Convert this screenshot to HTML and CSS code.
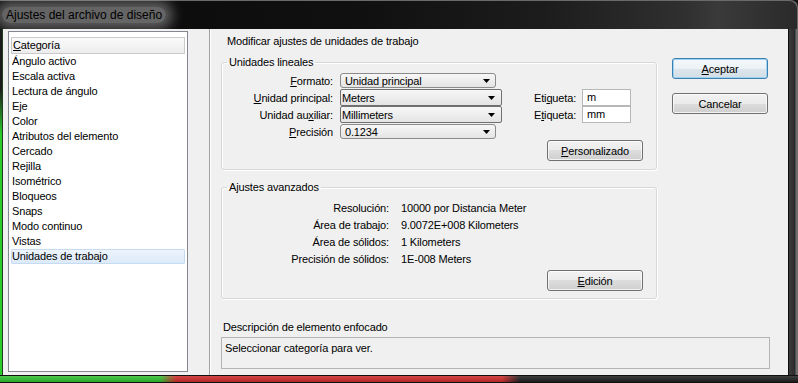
FILE: index.html
```html
<!DOCTYPE html>
<html lang="es">
<head>
    <meta charset="UTF-8">
    <meta name="viewport" content="width=device-width, initial-scale=1.0">
    <title>Ajustes del archivo de diseño</title>
    <link rel="stylesheet" href="styles.css">
</head>
<body>
    <div class="window">
        <div class="titlebar">
            <span class="title">Ajustes del archivo de diseño</span>
        </div>

        <div class="frame-mid">
            <div class="frame-left"></div>
            <div class="client">
                <aside class="sidebar">
                    <div class="listbox">
                        <div class="list-head"><u>C</u>ategoría</div>
                        <ul class="list">
                            <li>Ángulo activo</li>
                            <li>Escala activa</li>
                            <li>Lectura de ángulo</li>
                            <li>Eje</li>
                            <li>Color</li>
                            <li>Atributos del elemento</li>
                            <li>Cercado</li>
                            <li>Rejilla</li>
                            <li>Isométrico</li>
                            <li>Bloqueos</li>
                            <li>Snaps</li>
                            <li>Modo continuo</li>
                            <li>Vistas</li>
                            <li class="selected">Unidades de trabajo</li>
                        </ul>
                    </div>
                </aside>

                <div class="divider"></div>

                <main class="panel">
                    <div class="panel-title">Modificar ajustes de unidades de trabajo</div>

                    <div class="panel-top">
                        <div class="groups">
                            <fieldset class="group group-linear">
                                <legend>Unidades lineales</legend>
                                <div class="linear-grid">
                                    <span class="field-label"><u>F</u>ormato:</span>
                                    <div class="combo combo-list">
                                        <span>Unidad principal</span>
                                        <svg width="7" height="4" viewBox="0 0 7 4"><path d="M0 0h7L3.5 4z"/></svg>
                                    </div>
                                    <span></span><span></span>

                                    <span class="field-label"><u>U</u>nidad principal:</span>
                                    <div class="combo combo-edit">
                                        <span>Meters</span>
                                        <svg width="7" height="4" viewBox="0 0 7 4"><path d="M0 0h7L3.5 4z"/></svg>
                                    </div>
                                    <span class="tag-label">Eti<u>q</u>ueta:</span>
                                    <div class="textbox">m</div>

                                    <span class="field-label">Unidad au<u>x</u>iliar:</span>
                                    <div class="combo combo-edit">
                                        <span>Millimeters</span>
                                        <svg width="7" height="4" viewBox="0 0 7 4"><path d="M0 0h7L3.5 4z"/></svg>
                                    </div>
                                    <span class="tag-label">E<u>t</u>iqueta:</span>
                                    <div class="textbox">mm</div>

                                    <span class="field-label"><u>P</u>recisión</span>
                                    <div class="combo combo-list">
                                        <span>0.1234</span>
                                        <svg width="7" height="4" viewBox="0 0 7 4"><path d="M0 0h7L3.5 4z"/></svg>
                                    </div>
                                    <span></span><span></span>
                                </div>
                                <div class="group-foot">
                                    <button class="btn"><u>P</u>ersonalizado</button>
                                </div>
                            </fieldset>

                            <fieldset class="group group-adv">
                                <legend>Ajustes avanzados</legend>
                                <div class="adv-grid">
                                    <span class="adv-label">Resolución:</span>
                                    <span>10000 por Distancia Meter</span>
                                    <span class="adv-label">Área de trabajo:</span>
                                    <span>9.0072E+008 Kilometers</span>
                                    <span class="adv-label">Área de sólidos:</span>
                                    <span>1 Kilometers</span>
                                    <span class="adv-label">Precisión de sólidos:</span>
                                    <span>1E-008 Meters</span>
                                </div>
                                <div class="group-foot group-foot-adv">
                                    <button class="btn"><u>E</u>dición</button>
                                </div>
                            </fieldset>
                        </div>

                        <div class="actions">
                            <button class="btn btn-default"><u>A</u>ceptar</button>
                            <button class="btn">Cancelar</button>
                        </div>
                    </div>

                    <div class="desc-label">Descripción de elemento enfocado</div>
                    <div class="desc-box">Seleccionar categoría para ver.</div>
                </main>
            </div>
            <div class="frame-right"></div>
        </div>

        <div class="frame-bottom"></div>
    </div>
</body>
</html>
```

FILE: styles.css
```css
* {
    box-sizing: border-box;
}

body {
    margin: 0;
    background: #000;
    font-family: "Liberation Sans", Arial, sans-serif;
    font-size: 11px;
    letter-spacing: -0.15px;
    color: #000;
}

.window {
    width: 798px;
    height: 383px;
    display: grid;
    grid-template-rows: 29px 346px 8px;
    background: #151515;
    overflow: hidden;
}

/* barra de titulo estilo aero */
.titlebar {
    display: flex;
    align-items: center;
    padding-left: 2px;
    background: linear-gradient(90deg, #0a0a0a 0%, #101010 45%, #1c1c1c 68%, #303030 86%, #3a3a3a 90%, #2a2a2a 100%);
    border-top-right-radius: 8px;
    box-shadow: inset -1px 1px 0 #6a6a6a;
}

.title {
    font-size: 12px;
    letter-spacing: 0;
    line-height: 16px;
    padding: 0 4px;
    border-radius: 10px;
    background: rgba(190, 190, 190, 0.5);
    box-shadow: 0 0 12px 7px rgba(180, 180, 180, 0.48);
}

.frame-mid {
    display: flex;
}

.frame-left {
    width: 3px;
    background: linear-gradient(#1b1b1b 0, #1b1b1b 60px, #2ccb2c 105px, #2ccb2c 100%);
    border-right: 1px solid #1d3d1d;
}

.frame-right {
    flex: 1;
    background: linear-gradient(90deg, #0d0d0d 0 1px, #3b3b3b 1px, #2a2a2a 7px, #6e6e6e 8px);
}

.frame-bottom {
    background:
        linear-gradient(#101010 0 1px, transparent 1px, transparent 7px, #101010 7px),
        linear-gradient(rgba(255, 255, 255, 0.18), rgba(0, 0, 0, 0.18)),
        linear-gradient(90deg, #2dc42d 0, #2dc42d 160px, #d42727 176px, #d42727 502px, #1b1b1b 520px);
}

.client {
    width: 785px;
    display: flex;
    background: #f0f0f0;
}

/* lista de categorias */
.sidebar {
    width: 206px;
    padding: 2px 0 3px 5px;
}

.listbox {
    width: 180px;
    height: 341px;
    padding: 5px 2px 0 2px;
    background: #fff;
    border: 1px solid #828790;
}

.list-head {
    height: 17px;
    line-height: 15px;
    padding-left: 1px;
    border: 1px solid #cacaca;
    background: linear-gradient(#fafafa, #ededed);
}

.list {
    list-style: none;
    margin: 0;
    padding: 0;
}

.list li {
    height: 15px;
    line-height: 15px;
    padding-left: 1px;
}

.list li.selected {
    border-radius: 2px;
    background: linear-gradient(#eef5fd, #dbe9f9);
    box-shadow: inset 0 0 0 1px #c5dbf2;
}

.divider {
    width: 2px;
    border-left: 1px solid #a0a0a0;
    background: #fff;
}

/* panel derecho */
.panel {
    flex: 1;
    display: flex;
    flex-direction: column;
    padding: 5px 0 0 10px;
}

.panel-title {
    line-height: 15px;
    padding-left: 6px;
}

.panel-top {
    display: flex;
    gap: 15px;
}

.groups {
    width: 436px;
}

.group {
    margin: 6px 0 0 0;
    padding: 2px 0 8px 0;
    border: 1px solid #d5d9dc;
    border-radius: 3px;
    box-shadow: inset 1px 1px 0 #fff, 1px 1px 0 #fff;
}

.group legend {
    margin-left: 5px;
    padding: 0 2px;
    line-height: 15px;
}

.group-adv {
    margin-top: 10px;
    padding: 4px 0 7px 0;
}

.linear-grid {
    display: grid;
    grid-template-columns: 118px 162px 80px 49px;
    grid-auto-rows: 17px;
    align-items: center;
}

.field-label {
    text-align: right;
    padding-right: 7px;
}

.tag-label {
    padding-left: 32px;
}

.combo {
    display: flex;
    align-items: center;
    justify-content: space-between;
    border: 1px solid #707070;
    background: linear-gradient(#f7f7f7, #e4e4e4);
}

.combo-list {
    width: 156px;
    height: 15px;
    padding: 0 5px 0 4px;
    border-color: #8b8b8b;
    border-radius: 3px;
}

.combo-edit {
    width: 162px;
    height: 17px;
    padding: 0 6px 0 1px;
    border-radius: 2px;
}

.textbox {
    height: 17px;
    line-height: 15px;
    padding-left: 4px;
    background: #fff;
    border: 1px solid #b7b7b7;
}

.group-foot {
    display: flex;
    justify-content: flex-end;
    padding-right: 13px;
}

.group-foot-adv {
    margin-top: 3px;
}

.adv-grid {
    display: grid;
    grid-template-columns: 167px 1fr;
    column-gap: 12px;
    grid-auto-rows: 17px;
    align-items: center;
}

.adv-label {
    text-align: right;
}

.btn {
    width: 96px;
    height: 21px;
    padding: 0;
    font-family: inherit;
    font-size: 11px;
    letter-spacing: -0.15px;
    color: #000;
    border: 1px solid #707070;
    border-radius: 3px;
    background: linear-gradient(#f2f2f2 0%, #ebebeb 50%, #dddddd 50%, #cfcfcf 100%);
    box-shadow: inset 0 0 0 1px rgba(255, 255, 255, 0.75);
}

.btn-default {
    border-color: #3c7fb1;
    background: linear-gradient(#f4f8fb 0%, #ebf1f5 50%, #dde6ec 50%, #d2dde5 100%);
    box-shadow: inset 0 0 0 1px #9fd3f2;
}

.actions {
    width: 96px;
    padding-top: 9px;
    display: flex;
    flex-direction: column;
    gap: 14px;
}

.desc-label {
    margin-top: 21px;
    padding-left: 2px;
    line-height: 15px;
}

.desc-box {
    width: 549px;
    height: 32px;
    margin-top: 2px;
    padding: 3px;
    line-height: 15px;
    border: 1px solid #b4b4b4;
}
```
